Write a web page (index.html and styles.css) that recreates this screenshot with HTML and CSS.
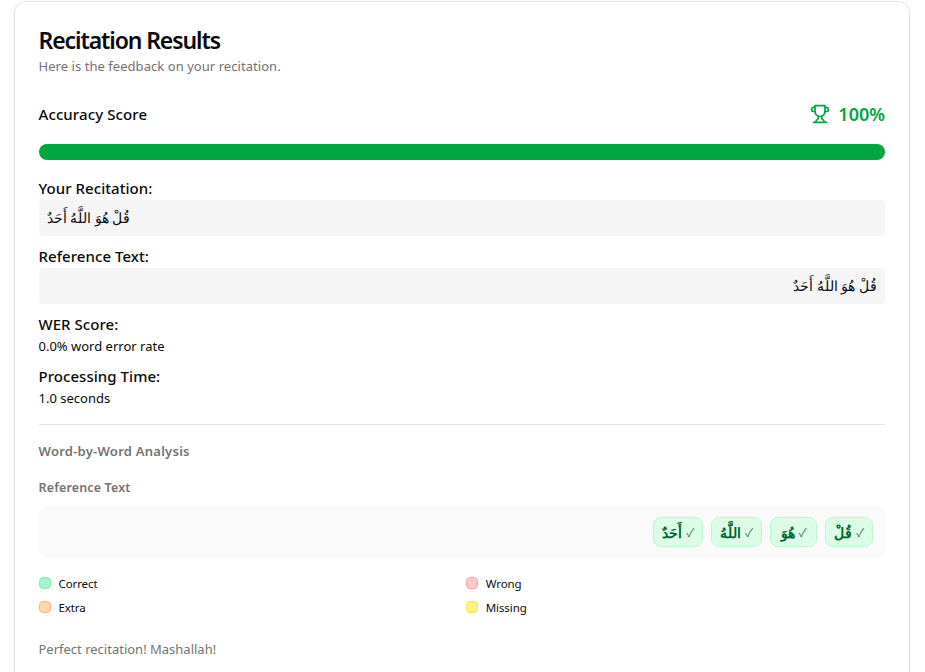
FILE: index.html
```html
<!DOCTYPE html>
<html lang="en">
<head>
<meta charset="utf-8">
<title>Recitation Results</title>
<link rel="stylesheet" href="styles.css">
</head>
<body>
<main class="card">
  <h1 class="title">Recitation Results</h1>
  <p class="subtitle">Here is the feedback on your recitation.</p>

  <div class="score-row">
    <span class="score-label">Accuracy Score</span>
    <span class="score-value">
      <svg class="trophy" viewBox="0 0 24 24" width="20" height="20" fill="none" stroke="currentColor" stroke-width="2" stroke-linecap="round" stroke-linejoin="round" aria-hidden="true">
        <path d="M6 9H4.5a2.5 2.5 0 0 1 0-5H6"/>
        <path d="M18 9h1.500a2.500 2.500 0 0 0 0-5H18"/>
        <path d="M4 22h16"/>
        <path d="M10 14.660V17c0 .550-.470.980-.970 1.210C7.850 18.750 7 20.240 7 22"/>
        <path d="M14 14.660V17c0 .550.470.980.970 1.210C16.150 18.750 17 20.240 17 22"/>
        <path d="M18 2H6v7a6 6 0 0 0 12 0V2Z"/>
      </svg>
      100%
    </span>
  </div>
  <div class="progress"><div class="progress-fill"></div></div>

  <section class="field">
    <h2 class="field-label">Your Recitation:</h2>
    <p class="arabic-box arabic-left" dir="auto"><bdi dir="rtl">قُلْ هُوَ اللَّهُ أَحَدٌ</bdi></p>
  </section>
  <section class="field">
    <h2 class="field-label">Reference Text:</h2>
    <p class="arabic-box" dir="rtl">قُلْ هُوَ اللَّهُ أَحَدٌ</p>
  </section>
  <section class="field">
    <h2 class="field-label">WER Score:</h2>
    <p class="field-value">0.0% word error rate</p>
  </section>
  <section class="field">
    <h2 class="field-label">Processing Time:</h2>
    <p class="field-value">1.0 seconds</p>
  </section>

  <hr class="divider">

  <h3 class="analysis-title">Word-by-Word Analysis</h3>
  <h4 class="analysis-sub">Reference Text</h4>
  <div class="chips" dir="rtl">
    <span class="chip" dir="ltr"><b>قُلْ</b><i>✓</i></span>
    <span class="chip" dir="ltr"><b>هُوَ</b><i>✓</i></span>
    <span class="chip" dir="ltr"><b>اللَّهُ</b><i>✓</i></span>
    <span class="chip" dir="ltr"><b>أَحَدٌ</b><i>✓</i></span>
  </div>

  <ul class="legend">
    <li class="legend-item"><span class="dot dot-correct"></span>Correct</li>
    <li class="legend-item"><span class="dot dot-wrong"></span>Wrong</li>
    <li class="legend-item"><span class="dot dot-extra"></span>Extra</li>
    <li class="legend-item"><span class="dot dot-missing"></span>Missing</li>
  </ul>

  <p class="message">Perfect recitation! Mashallah!</p>
</main>
</body>
</html>
```
FILE: styles.css
```css
* { box-sizing: border-box; }
html, body { margin: 0; height: 672px; overflow: hidden; background: #fff; }
body {
  padding: 1px 15px 0 14px;
  font-family: "Noto Sans", "Open Sans", "Noto Sans CJK SC", sans-serif;
  color: #0a0a0a;
}
.card {
  border: 1px solid #e5e5e5;
  border-bottom: 0;
  border-radius: 12px 12px 0 0;
  padding: 24px 24px 0 23.500px;
  height: 671px;
  box-shadow: 0 1px 3px rgba(0, 0, 0, .08);
  background: #fff;
}
.title { margin: 0; font-size: 23px; line-height: 28px; font-weight: 600; letter-spacing: -1.100px; }
.subtitle { margin: 2px 0 0; font-size: 13px; line-height: 20px; color: #737373; letter-spacing: .05px; }
.score-row { display: flex; justify-content: space-between; align-items: center; margin-top: 24px; height: 28px; }
.score-label { font-size: 15px; font-weight: 500; letter-spacing: .1px; }
.score-value { display: flex; align-items: center; gap: 8px; color: #00a63e; font-size: 18px; font-weight: 600; }
.trophy { display: block; }
.progress { margin-top: 16px; height: 16px; border-radius: 8px; background: #e5e5e5; overflow: hidden; }
.progress-fill { width: 100%; height: 100%; background: #00a63e; }
.field { margin-top: 8px; }
.field-label { margin: 0; font-size: 15px; line-height: 24px; font-weight: 500; letter-spacing: .05px; }
.field:nth-of-type(1) { margin-top: 16px; }
.arabic-box { margin: 0; height: 36px; padding: 8px; border-radius: 4px; background: #f5f5f5; font-size: 13.500px; line-height: 20px; }
.arabic-left { text-align: left; }
.field-value { margin: 0; font-size: 13px; line-height: 20px; }
.divider { border: 0; border-top: 1px solid #e5e5e5; margin: 16px 0 0; }
.analysis-title { margin: 16px 0 0; font-size: 13px; line-height: 20px; font-weight: 600; color: #737373; letter-spacing: .25px; }
.analysis-sub { margin: 17px 0 0; font-size: 12.500px; line-height: 20px; font-weight: 600; color: #737373; letter-spacing: .15px; }
.chips { display: flex; gap: 8px; margin-top: 8px; padding: 11px 12px; height: 52px; background: #fafafa; border-radius: 8px; }
.chip { display: flex; align-items: center; justify-content: center; gap: 4px; min-width: 47px; height: 30px; padding: 0 8px; border: 1px solid #b9f8cf; border-radius: 8px; background: #dcfce7; color: #016630; font-size: 14px; }
.chip b { font-weight: 700; }
.chip i { font-style: normal; font-size: 11.500px; color: #3f7a58; }
.legend { list-style: none; display: grid; grid-template-columns: 1fr 1fr; gap: 8px; margin: 17px 0 0; padding: 0; }
.legend-item { display: flex; align-items: center; gap: 8px; height: 16px; font-size: 11.500px; letter-spacing: -.1px; }
.dot { width: 12px; height: 12px; border-radius: 4px; border: 1px solid transparent; }
.dot-correct { background: #a7f3d0; border-color: #86efac; }
.dot-wrong { background: #fecaca; border-color: #fca5a5; }
.dot-extra { background: #fed7aa; border-color: #fdba74; }
.dot-missing { background: #fef08a; border-color: #fde047; }
.message { margin: 24px 0 0; font-size: 13px; line-height: 20px; color: #737373; }
```
